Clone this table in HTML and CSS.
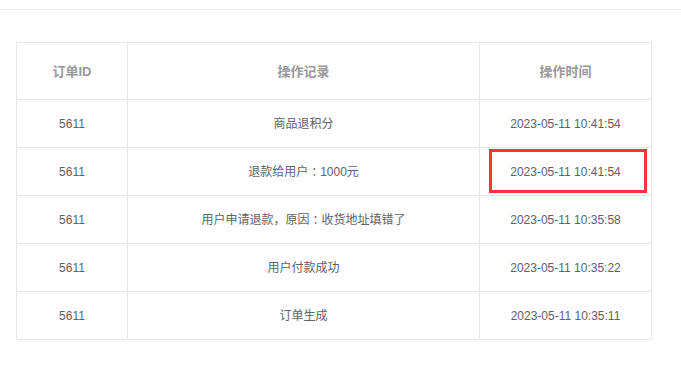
FILE: index.html
```html
<!DOCTYPE html>
<html lang="zh-CN">
<head>
<meta charset="utf-8">
<title>订单操作记录</title>
<link rel="stylesheet" href="styles.css">
</head>
<body>
<div class="topbar"></div>
<div class="wrap">
  <div class="table">
    <div class="cell head">订单ID</div>
    <div class="cell head">操作记录</div>
    <div class="cell head">操作时间</div>

    <div class="cell">5611</div>
    <div class="cell">商品退积分</div>
    <div class="cell">2023-05-11 10:41:54</div>

    <div class="cell">5611</div>
    <div class="cell">退款给用户<span class="colon">：</span>1000元</div>
    <div class="cell marked">2023-05-11 10:41:54<span class="mark"></span></div>

    <div class="cell">5611</div>
    <div class="cell">用户申请退款，原因<span class="colon">：</span>收货地址填错了</div>
    <div class="cell">2023-05-11 10:35:58</div>

    <div class="cell">5611</div>
    <div class="cell">用户付款成功</div>
    <div class="cell">2023-05-11 10:35:22</div>

    <div class="cell">5611</div>
    <div class="cell">订单生成</div>
    <div class="cell">2023-05-11 10:35:11</div>
  </div>
</div>
</body>
</html>
```
FILE: styles.css
```css
html, body {
  margin: 0;
  padding: 0;
  background: #ffffff;
}
body {
  font-family: "Liberation Sans", "Noto Sans CJK SC", sans-serif;
  font-size: 12px;
  color: #606266;
}
.topbar {
  height: 9px;
  border-bottom: 1px solid #ebebeb;
}
.wrap {
  padding: 32px 0 0 16px;
}
.table {
  display: grid;
  grid-template-columns: 111px 352px 172px;
  grid-template-rows: 57px;
  grid-auto-rows: 48px;
  width: 635px;
  border-left: 1px solid #e8e8e8;
  border-top: 1px solid #e8e8e8;
}
.cell {
  box-sizing: border-box;
  display: flex;
  align-items: center;
  justify-content: center;
  border-right: 1px solid #e8e8e8;
  border-bottom: 1px solid #e8e8e8;
  line-height: 1;
}
.head {
  font-size: 13px;
  font-weight: bold;
  color: #999999;
}
.colon {
  font-family: "Noto Sans CJK JP", sans-serif;
}
.marked {
  position: relative;
}
.mark {
  position: absolute;
  left: 9px;
  top: 1px;
  width: 158px;
  height: 44px;
  box-sizing: border-box;
  border: 3px solid #f53537;
}
```
